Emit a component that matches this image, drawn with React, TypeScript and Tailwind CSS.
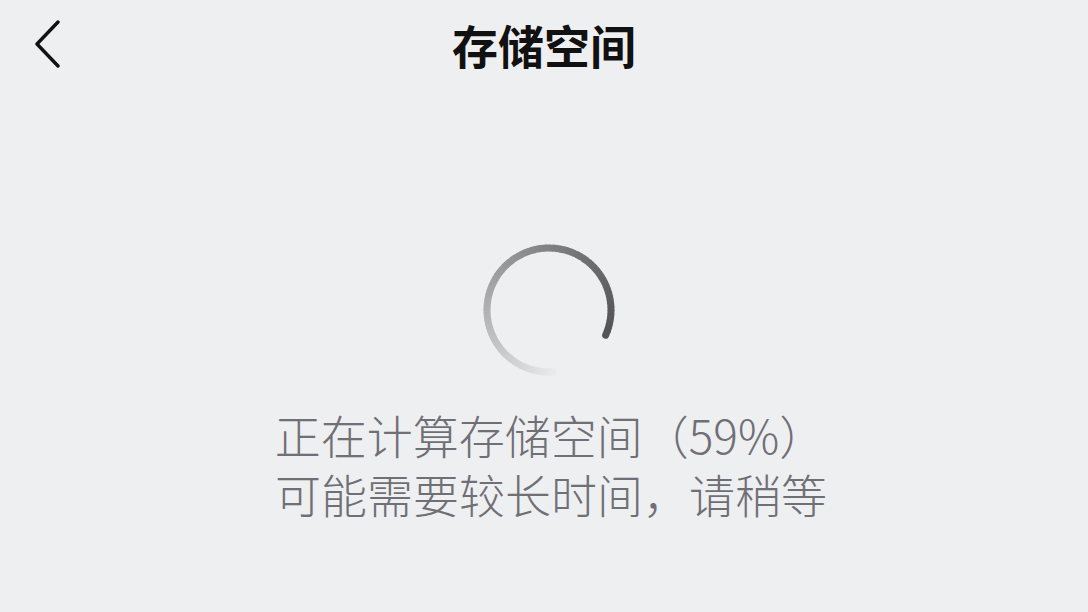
import React from "react";

function Spinner() {
  const cx = 70;
  const cy = 70;
  const r = 62;
  const start = 24; // degrees, screen coords (clockwise from +x)
  const span = 300;
  const n = 90;
  const segs = [];
  for (let i = 0; i < n; i++) {
    const a0 = ((start - (span * i) / n) * Math.PI) / 180;
    const a1 = ((start - (span * (i + 1)) / n - 0.6) * Math.PI) / 180;
    const t = i / n;
    const g = Math.round(85 + (236 - 85) * Math.pow(t, 1.25));
    const x0 = cx + r * Math.cos(a0);
    const y0 = cy + r * Math.sin(a0);
    const x1 = cx + r * Math.cos(a1);
    const y1 = cy + r * Math.sin(a1);
    segs.push(
      <path
        key={i}
        d={`M ${x0} ${y0} A ${r} ${r} 0 0 0 ${x1} ${y1}`}
        stroke={`rgb(${g},${g},${g + 2})`}
        strokeWidth={7}
        fill="none"
        strokeLinecap={i === 0 ? "round" : "butt"}
      />
    );
  }
  return (
    <svg width="140" height="140" viewBox="0 0 140 140">
      {segs.reverse()}
    </svg>
  );
}

export default function App() {
  return (
    <div
      className="w-[1088px] h-[612px] bg-[#eeeff1] flex flex-col overflow-hidden"
      style={{ fontFamily: '"Noto Sans CJK SC", "Noto Sans", sans-serif' }}
    >
      <div className="h-[90px] flex items-center relative shrink-0">
        <div className="absolute left-[33px] top-[20px]">
          <svg width="30" height="48" viewBox="0 0 30 48">
            <polyline
              points="25,2 4,24 25,46"
              fill="none"
              stroke="#111"
              strokeWidth="3.4"
              strokeLinecap="round"
              strokeLinejoin="round"
            />
          </svg>
        </div>
        <div className="flex-1 text-center text-[46px] leading-none font-bold text-[#111] pb-[2px]">
          存储空间
        </div>
      </div>
      <div className="flex flex-col items-center pt-[150px] pl-[10px]">
        <Spinner />
      </div>
      <div
        className="flex flex-col items-center mt-[25px] text-[46px] leading-[59px] font-light text-[#706f75]"
        style={{ fontFamily: '"Noto Sans CJK SC Light", "Noto Sans CJK SC DemiLight", "Noto Sans CJK SC", sans-serif' }}
      >
        <div className="pl-[12px]">正在计算存储空间（59%）</div>
        <div className="pl-[14px]">可能需要较长时间，请稍等</div>
      </div>
    </div>
  );
}
